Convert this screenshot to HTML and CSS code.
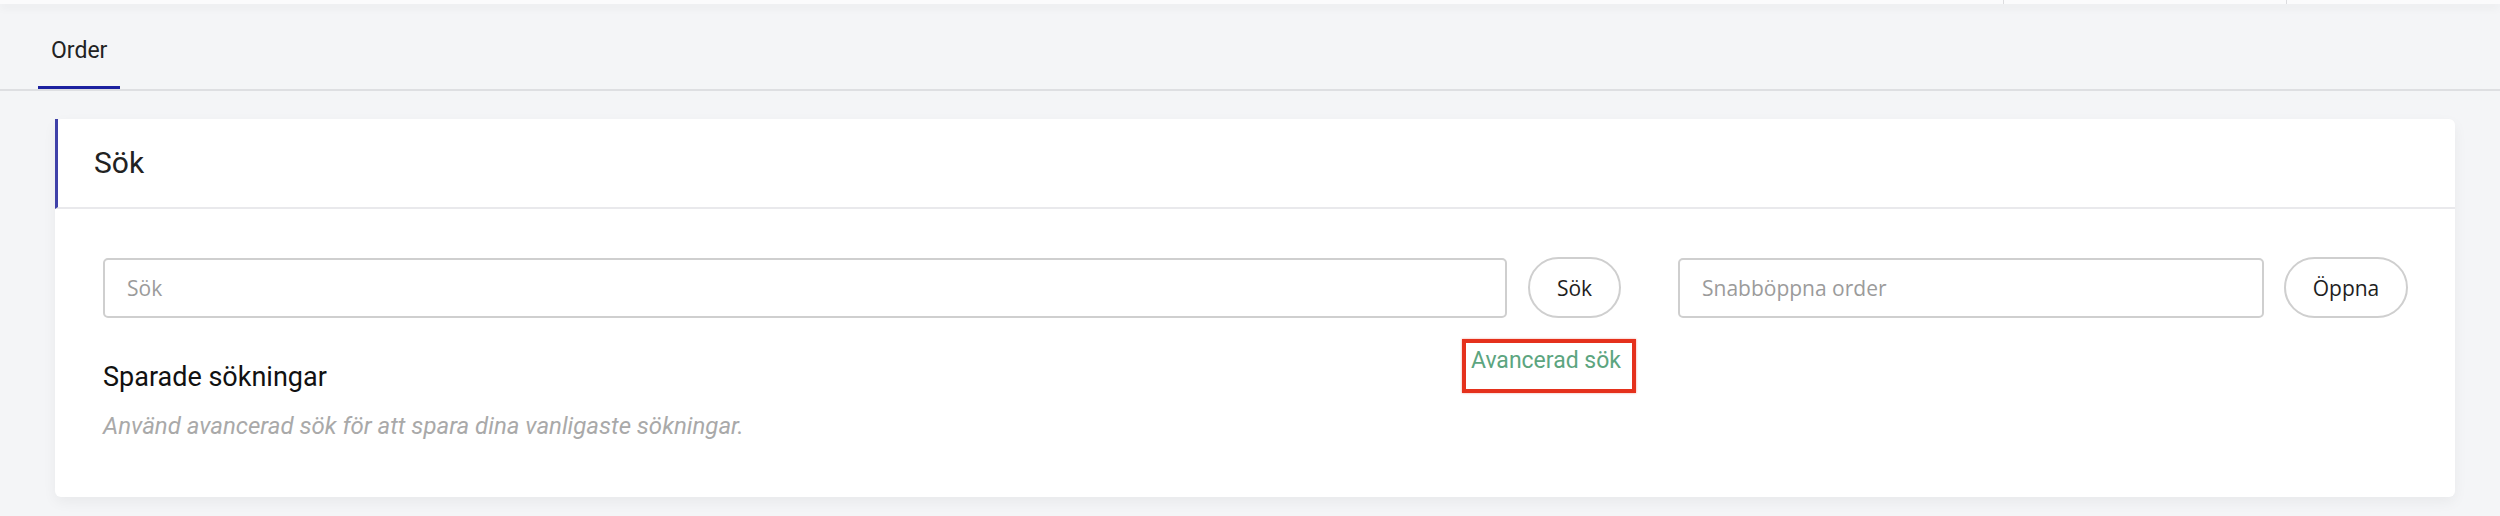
FILE: index.html
```html
<!DOCTYPE html>
<html lang="sv">
<head>
<meta charset="utf-8">
<title>Order</title>
<link rel="stylesheet" href="styles.css">
</head>
<body>
  <div class="topbar">
    <div class="topbar-fill"></div>
    <div class="topbar-item topbar-item-a"></div>
    <div class="topbar-item topbar-item-b"></div>
  </div>
  <nav class="tabs">
    <div class="tab tab-active">Order</div>
  </nav>
  <main class="main">
    <section class="card">
      <header class="card-header">Sök</header>
      <div class="card-body">
        <div class="search-grid">
          <div class="col-main">
            <div class="search-row">
              <input class="field" type="text" placeholder="Sök">
              <button class="btn btn-search">Sök</button>
            </div>
            <div class="saved-row">
              <div class="saved">
                <h3 class="saved-title">Sparade sökningar</h3>
                <p class="saved-hint">Använd avancerad sök för att spara dina vanligaste sökningar.</p>
              </div>
              <a class="advanced" href="#">Avancerad sök</a>
            </div>
          </div>
          <div class="col-quick">
            <div class="search-row search-row-quick">
              <input class="field" type="text" placeholder="Snabböppna order">
              <button class="btn btn-open">Öppna</button>
            </div>
          </div>
        </div>
      </div>
    </section>
  </main>
</body>
</html>
```
FILE: styles.css
```css
* { box-sizing: border-box; }

html, body {
  margin: 0;
  padding: 0;
}

body {
  background: #f4f5f7;
  font-family: Roboto, "Liberation Sans", Arial, sans-serif;
  color: #222;
  height: 516px;
  overflow: hidden;
}

.topbar {
  position: relative;
  z-index: 2;
  display: flex;
  height: 4px;
  background: #fbfbfc;
  box-shadow: 0 3px 10px rgba(0, 0, 0, 0.07);
}

.topbar-fill { flex: 1; }

.topbar-item {
  border-left: 1px solid #dcdcdf;
}

.topbar-item-a { width: 283px; }
.topbar-item-b { width: 214px; }

.tabs {
  display: flex;
  padding-left: 38px;
  border-bottom: 2px solid #dedfe2;
}

.tab {
  padding: 33px 13px 22px;
  font-size: 23px;
  line-height: 27px;
  color: #222;
  border-bottom: 3px solid transparent;
}

.tab-active {
  border-bottom-color: #1c21a0;
}

.main {
  padding: 28px 45px 0 55px;
}

.card {
  background: #fff;
  border-radius: 6px;
  box-shadow: 0 5px 14px rgba(0, 0, 0, 0.05);
}

.card-header {
  border-left: 3px solid #3f41a8;
  border-bottom: 2px solid #e9e9ec;
  padding: 26px 36px 26px;
  font-size: 30px;
  line-height: 36px;
  color: #222;
}

.card-body {
  padding: 48px 47px 57px 48px;
}

.search-grid {
  display: grid;
  grid-template-columns: 1fr 730px;
  column-gap: 57px;
  align-items: start;
}

.search-row {
  display: flex;
  align-items: center;
  gap: 21px;
}

.search-row-quick { gap: 20px; }

.field {
  flex: 1;
  min-width: 0;
  height: 60px;
  border: 2px solid #cfcfcf;
  border-radius: 5px;
  padding: 0 22px;
  font-family: "Open Sans", "Noto Sans", sans-serif;
  font-size: 21px;
  color: #333;
  background: #fff;
  outline: none;
}

.field::placeholder {
  color: #9b9b9b;
}

.btn {
  height: 61px;
  border: 2px solid #cfcfcf;
  border-radius: 31px;
  background: #fff;
  font-family: "Open Sans", "Noto Sans", sans-serif;
  font-size: 21px;
  color: #1e1e1e;
  padding: 0;
}

.btn-search { width: 93px; }
.btn-open { width: 124px; }

.saved-row {
  display: flex;
  justify-content: space-between;
  align-items: flex-start;
}

.saved {
  padding-top: 43px;
}

.saved-title {
  margin: 0;
  font-size: 27px;
  line-height: 32px;
  font-weight: 400;
  color: #111;
}

.saved-hint {
  margin: 19px 0 0;
  font-size: 24px;
  line-height: 28px;
  font-style: italic;
  color: #a9a9a9;
}

.advanced {
  position: relative;
  margin-top: 29px;
  font-size: 23px;
  line-height: 27px;
  color: #5ca57f;
  text-decoration: none;
}

.advanced::after {
  content: "";
  position: absolute;
  top: -8px;
  right: -15px;
  bottom: -19px;
  left: -9px;
  border: 4px solid #e5311c;
  box-shadow: 0 0 2px rgba(229, 49, 28, 0.45);
}
```
